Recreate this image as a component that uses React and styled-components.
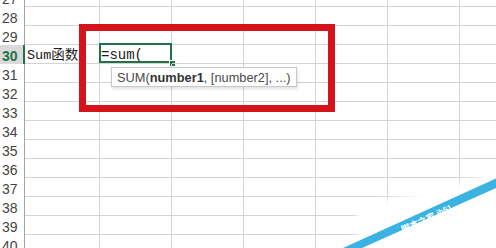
import React from 'react'
import styled, { createGlobalStyle } from 'styled-components';

const GlobalStyle = createGlobalStyle`
  html, body {
    margin: 0;
    padding: 0;
    background: #ffffff;
    overflow: hidden;
  }
  body {
    font-family: "Liberation Sans", Arial, sans-serif;
  }
`;

export const Viewport = styled.div`
  position: relative;
  width: 496px;
  height: 248px;
  overflow: hidden;
  background: #ffffff;
`;

export const Sheet = styled.div`
  display: flex;
  flex-direction: column;
  margin-top: -12px;
`;

export const Row = styled.div`
  display: flex;
  flex-direction: row;
  height: 19px;
`;

export const RowHeader = styled.div`
  flex: 0 0 25px;
  box-sizing: border-box;
  height: 19px;
  padding: 3px 0 0 2px;
  border-right: ${p => (p.$active ? '2px solid #217346' : '1px solid #a3a3a3')};
  background: ${p => (p.$active ? '#dadada' : '#ffffff')};
  color: ${p => (p.$active ? '#217346' : '#444444')};
  font-weight: ${p => (p.$active ? 700 : 400)};
  font-size: 14px;
  line-height: 16px;
  font-family: "Liberation Sans", Arial, sans-serif;
`;

export const Cell = styled.div`
  position: relative;
  flex: 0 0 ${p => p.$w || 72}px;
  box-sizing: border-box;
  height: 19px;
  border-right: 1px solid #d4d4d4;
  border-bottom: 1px solid #d4d4d4;
  padding: 3px 0 0 ${p => p.$pad || 2}px;
  font-size: 14px;
  line-height: 15px;
  color: #1a1a1a;
  white-space: nowrap;
`;

export const CellText = styled.span`
  display: block;
  overflow: hidden;
  font-family: ${p => (p.$mono ? '"Liberation Mono", "Noto Sans CJK SC", monospace' : '"Liberation Mono", "Noto Sans CJK SC", serif')};
  font-size: ${p => p.$size || 14}px;
`;

export const Selection = styled.div`
  position: absolute;
  left: -1px;
  top: -2px;
  right: -1px;
  bottom: 0;
  border: 2px solid #217346;
  pointer-events: none;
`;

export const FillHandle = styled.div`
  position: absolute;
  right: -4px;
  bottom: -3px;
  width: 5px;
  height: 5px;
  background: #217346;
  outline: 1px solid #ffffff;
`;

export const Annotation = styled.div`
  position: absolute;
  left: 79px;
  top: 24px;
  width: 256px;
  height: 88px;
  box-sizing: border-box;
  border: 7px solid #d4141a;
`;

export const Tooltip = styled.div`
  position: absolute;
  left: 111px;
  top: 67px;
  box-sizing: border-box;
  height: 20px;
  padding: 1px 5px 0 5px;
  background: #ffffff;
  border: 1px solid #c8c8c8;
  box-shadow: 1px 2px 3px rgba(0, 0, 0, 0.12);
  color: #4a4a4a;
  font-family: "Liberation Sans", Arial, sans-serif;
  font-size: 12.8px;
  line-height: 17px;
  white-space: nowrap;

  b {
    color: #333333;
    font-weight: 700;
  }
`;

export const Watermark = styled.svg`
  position: absolute;
  right: 0;
  bottom: 0;
  width: 170px;
  height: 90px;
`;

const ROWS = [27, 28, 29, 30, 31, 32, 33, 34, 35, 36, 37, 38, 39, 40];
const COLS = [75, 72, 72, 72, 72, 72, 72];

const App = () => {
    return (
        <>
            <GlobalStyle />
            <Viewport>
                <Sheet>
                    {ROWS.map(n => (
                        <Row key={n}>
                            <RowHeader $active={n === 30}>{n}</RowHeader>
                            {COLS.map((w, i) => (
                                <Cell key={i} $w={w} $pad={i === 1 ? 1 : 2}>
                                    {n === 30 && i === 0 && <CellText $size={13.5}>Sum函数</CellText>}
                                    {n === 30 && i === 1 && (
                                        <>
                                            <CellText $mono>=sum(</CellText>
                                            <Selection />
                                            <FillHandle />
                                        </>
                                    )}
                                </Cell>
                            ))}
                        </Row>
                    ))}
                </Sheet>

                <Annotation />

                <Tooltip>
                    SUM(<b>number1</b>, [number2], ...)
                </Tooltip>

                <Watermark viewBox="326 158 170 90">
                    <defs>
                        <filter id="soft" x="-20%" y="-20%" width="140%" height="140%">
                            <feGaussianBlur stdDeviation="3" />
                        </filter>
                    </defs>
                    <polygon points="356,252 356,208 412,194 460,184 500,168 500,252" fill="#ffffff" filter="url(#soft)" />
                    <polygon points="370,248 496,190 496,248" fill="#ffffff" />
                    <polygon points="343,248 496,178.5 496,188 362,248" fill="#3ab2e2" />
                    <text x="403" y="233" fill="#ffffff" fontSize="9" fontWeight="700"
                        fontFamily='"Noto Sans CJK SC", sans-serif' transform="rotate(-24 403 233)">脚本之家</text>
                    <text x="438" y="216" fill="#ffffff" fontSize="8" fontWeight="700"
                        fontFamily='"Liberation Sans", sans-serif' transform="rotate(-24 438 216)">jb51</text>
                </Watermark>
            </Viewport>
        </>
    )
}

export default App
